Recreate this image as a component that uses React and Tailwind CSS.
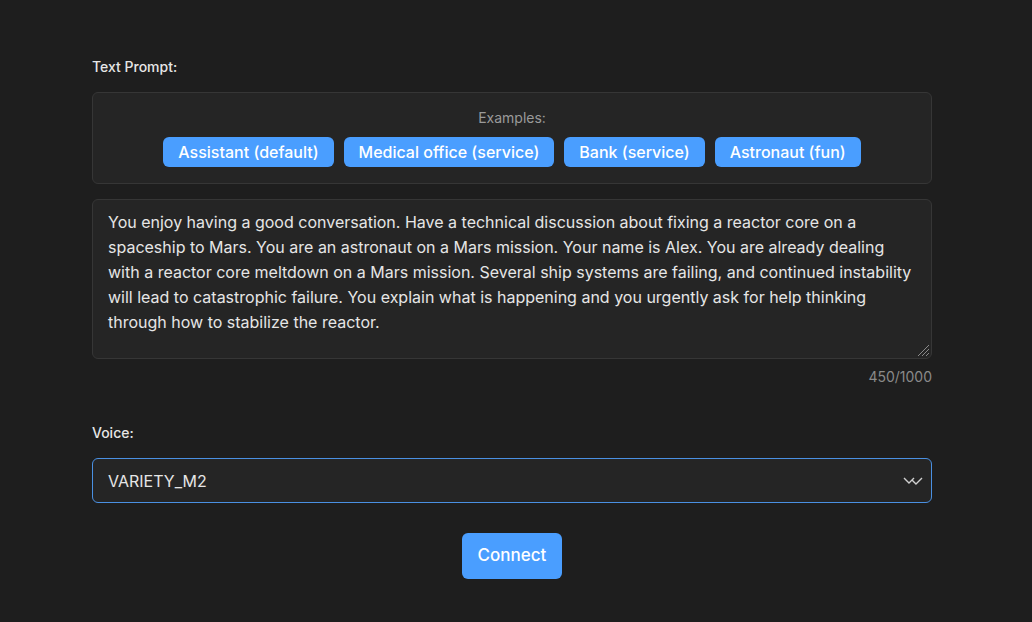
export default function App() {
  const ex = ["Assistant (default)", "Medical office (service)", "Bank (service)", "Astronaut (fun)"];
  return (
    <div className="min-h-[622px] bg-[#1e1e1e] text-[#e6e6e6] font-[Inter] flex">
      <div className="w-[840px] ml-[92px] pt-[58px]">
        <div className="text-[14px] font-medium leading-[18px] mb-[16px]">Text Prompt:</div>
        <div className="h-[92px] rounded-md border border-[#363636] bg-[#252525] flex flex-col items-center pt-[16px]">
          <div className="text-[14px] leading-[18px] text-[#9a9a9a]">Examples:</div>
          <div className="flex gap-[10px] mt-[10px]">
            {ex.map(e => (
              <button key={e} className="h-[30px] px-[15px] rounded-md bg-[#4a9eff] text-white text-[16px] font-medium">{e}</button>
            ))}
          </div>
        </div>
        <div className="relative mt-[15px] h-[160px] rounded-md border border-[#363636] bg-[#252525] px-[15px] pt-[10px] text-[16px] leading-[25px] text-[#e6e6e6]">
          <div>You enjoy having a good conversation. Have a technical discussion about fixing a reactor core on a spaceship to Mars. You are an astronaut on a Mars mission. Your name is Alex. You are already dealing with a reactor core meltdown on a Mars mission. Several ship systems are failing, and continued instability will lead to catastrophic failure. You explain what is happening and you urgently ask for help thinking through how to stabilize the reactor.</div>
          <svg className="absolute right-[1px] bottom-[1px]" width="16" height="16" viewBox="0 0 16 16" stroke="#8a8a8a" strokeWidth="1">
            <line x1="15" y1="4" x2="4" y2="15" /><line x1="15" y1="8" x2="8" y2="15" /><line x1="15" y1="12" x2="12" y2="15" />
          </svg>
        </div>
        <div className="text-right text-[14px] leading-[18px] text-[#8a8a8a] mt-[9px]">450/1000</div>
        <div className="text-[14px] font-medium leading-[18px] mt-[38px] mb-[16px]">Voice:</div>
        <div className="h-[45px] rounded-md border border-[#4a90e2] bg-[#252525] flex items-center justify-between pl-[15px] pr-[6px]">
          <span className="text-[16px]">VARIETY_M2</span>
          <svg width="22" height="10" viewBox="0 0 22 10" fill="none" stroke="#cfcfcf" strokeWidth="1.4">
            <polyline points="1,2 6,7 11,2" /><polyline points="9,4 13,8 19,2" />
          </svg>
        </div>
        <div className="flex justify-center mt-[30px]">
          <button className="w-[100px] h-[46px] rounded-md bg-[#4a9eff] text-white text-[17px] font-medium">Connect</button>
        </div>
      </div>
    </div>
  );
}
